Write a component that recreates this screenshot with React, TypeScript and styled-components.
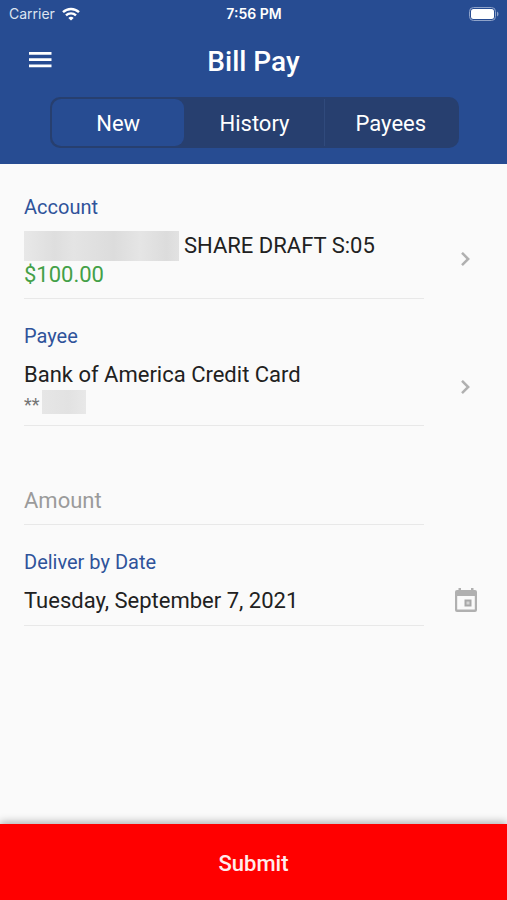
import React, { useState } from "react";
import styled, { createGlobalStyle } from "styled-components";

const GlobalStyle = createGlobalStyle`
  *, *::before, *::after { box-sizing: border-box; }
  body {
    margin: 0;
    background: #fafafa;
    color: #212121;
    font-family: Roboto, sans-serif;
  }
  button, input { font: inherit; color: inherit; }
`;

const Page = styled.div`
  display: flex;
  flex-direction: column;
  min-height: 100vh;
`;

const Header = styled.header`
  padding-bottom: 16px;
  background: #274c92;
  color: #fff;
`;

const StatusBar = styled.div`
  display: grid;
  grid-template-columns: 1fr auto 1fr;
  align-items: center;
  height: 27px;
  padding: 0 8px 0 9px;
  font-family: Inter, sans-serif;
  font-size: 14px;
`;

const Carrier = styled.span`
  display: flex;
  align-items: center;
  gap: 7px;
  color: #dde4f0;
`;

const Clock = styled.span`
  font-weight: 600;
`;

const Battery = styled.span`
  display: flex;
  justify-content: flex-end;
`;

const TitleBar = styled.div`
  display: grid;
  grid-template-columns: 32px 1fr 32px;
  align-items: center;
  height: 70px;
  padding: 0 24px;
`;

const IconButton = styled.button`
  display: flex;
  justify-content: center;
  padding: 0 0 4px;
  border: 0;
  background: none;
  cursor: pointer;
`;

const Title = styled.h1`
  margin: 0;
  font-size: 28px;
  font-weight: 500;
  line-height: 36px;
  text-align: center;
`;

const Tabs = styled.nav`
  display: grid;
  grid-template-columns: repeat(3, 1fr);
  margin: 0 48px 0 50px;
  border-radius: 10px;
  background: #273f6f;
`;

const Tab = styled.button<{ $active: boolean; $divided: boolean }>`
  height: 47px;
  margin: 2px;
  padding: 2px 0 0;
  border: 0;
  border-radius: ${(p) => (p.$active ? "9px" : "0")};
  background: ${(p) => (p.$active ? "#274c92" : "transparent")};
  box-shadow: ${(p) => (p.$divided ? "-1px 0 #304a7c" : "none")};
  font-size: 22px;
  line-height: 30px;
  cursor: pointer;
`;

const Form = styled.form`
  display: flex;
  flex: 1;
  flex-direction: column;
`;

const Fields = styled.div`
  display: flex;
  flex: 1;
  flex-direction: column;
  gap: 25px;
  padding: 31px 0 24px 24px;
`;

const Field = styled.div<{ $spaced?: boolean }>`
  padding-top: ${(p) => (p.$spaced ? "34px" : "0")};
`;

const Label = styled.label`
  display: block;
  margin-bottom: 12px;
  color: #2f539a;
  font-size: 20px;
  line-height: 24px;
`;

const Picker = styled.button`
  display: grid;
  grid-template-columns: 1fr 83px;
  align-items: center;
  justify-items: start;
  width: 100%;
  padding: 0;
  border: 0;
  background: none;
  text-align: left;
  cursor: pointer;

  > svg { justify-self: center; }
`;

const Rule = styled.hr`
  height: 1px;
  margin: 9px 83px 0 0;
  border: 0;
  background: #e8e8e8;
`;

const Line = styled.span`
  display: flex;
  align-items: center;
  font-size: 22px;
  line-height: 30px;
`;

const Balance = styled.span`
  display: block;
  color: #43a047;
  font-size: 22px;
  line-height: 28px;
`;

const Masked = styled.span`
  display: flex;
  align-items: flex-start;
  height: 26px;
  gap: 2px;
  color: #757575;
  font-size: 18px;
`;

const Stars = styled.span`
  padding-top: 4px;
  line-height: 22px;
`;

const Redacted = styled.span<{ $long?: boolean }>`
  width: ${(p) => (p.$long ? "155px" : "44px")};
  height: ${(p) => (p.$long ? "30px" : "24px")};
  margin-right: ${(p) => (p.$long ? "5px" : "0")};
  background: ${(p) =>
    p.$long
      ? "linear-gradient(90deg, #e8e8e8, #dedede 20%, #e4e4e4 32%, #dcdcdc 58%, #e5e5e5 75%, #dcdcdc 92%, #e2e2e2)"
      : "linear-gradient(90deg, #e6e6e6, #e2e2e2 60%, #e8e8e8)"};
`;

const AmountInput = styled.input`
  display: block;
  width: calc(100% - 83px);
  height: 30px;
  padding: 0;
  border: 0;
  outline: 0;
  background: none;
  font-size: 22px;

  &::placeholder { color: #9b9b9b; opacity: 1; }
`;

const Submit = styled.button`
  height: 76px;
  padding: 2px 0 0;
  border: 0;
  background: #ff0000;
  box-shadow: 0 -2px 8px rgba(0, 0, 0, 0.3);
  color: #ffecec;
  font-size: 22px;
  font-weight: 500;
  cursor: pointer;
`;

const WifiIcon = () => (
  <svg width="18" height="14" viewBox="0 0 18 14" fill="none" stroke="#fff" strokeWidth="2.4" aria-hidden="true">
    <path d="M1 5.2a11.6 11.6 0 0 1 16 0" />
    <path d="M4 8.4a7.2 7.2 0 0 1 10 0" />
    <path d="M6.3 10.9a4 4 0 0 1 5.4 0L9 13.6z" fill="#fff" stroke="none" />
  </svg>
);

const BatteryIcon = () => (
  <svg width="30" height="14" viewBox="0 0 30 14" aria-hidden="true">
    <rect x="0.5" y="0.5" width="26" height="13" rx="4" fill="none" stroke="#8fa3c9" />
    <rect x="2" y="2" width="23" height="10" rx="2.5" fill="#fff" />
    <path d="M28 4.5c2 1 2 4 0 5z" fill="#8fa3c9" />
  </svg>
);

const MenuIcon = () => (
  <svg width="24" height="18" viewBox="0 0 24 18" fill="#fff" aria-hidden="true">
    <path d="M1 1h22.500v2.700H1zM1 7.200h22.500v2.700H1zM1 13.500h22.500v2.700H1z" />
  </svg>
);

const ChevronIcon = () => (
  <svg width="12" height="16" viewBox="0 0 12 16" fill="none" stroke="#b0b0b0" strokeWidth="2.5" aria-hidden="true">
    <path d="M2 0.800 8.200 7 2 13.200" />
  </svg>
);

const CalendarIcon = () => (
  <svg width="24" height="26" viewBox="0 0 24 26" aria-hidden="true">
    <path
      fill="#b0b0b0"
      fillRule="evenodd"
      d="M4.500 0h2.500v2h10v-2h2.500v2H21a2 2 0 0 1 2 2V22a2 2 0 0 1-2 2H3a2 2 0 0 1-2-2V4a2 2 0 0 1 2-2h1.500zM3.200 8v13.600h17.600V8z"
    />
    <rect x="11.500" y="12.500" width="5" height="5" fill="#d4d4d4" stroke="#a8a8a8" strokeWidth="2" />
  </svg>
);

const tabs = ["New", "History", "Payees"];

export default function App() {
  const [active, setActive] = useState(0);
  const [amount, setAmount] = useState("");

  return (
    <Page>
      <GlobalStyle />
      <Header>
        <StatusBar>
          <Carrier>
            Carrier
            <WifiIcon />
          </Carrier>
          <Clock>7:56 PM</Clock>
          <Battery>
            <BatteryIcon />
          </Battery>
        </StatusBar>
        <TitleBar>
          <IconButton type="button" aria-label="Menu">
            <MenuIcon />
          </IconButton>
          <Title>Bill Pay</Title>
        </TitleBar>
        <Tabs aria-label="Bill Pay sections">
          {tabs.map((name, i) => (
            <Tab
              key={name}
              type="button"
              $active={i === active}
              $divided={i > 0 && i !== active && i - 1 !== active}
              aria-pressed={i === active}
              onClick={() => setActive(i)}
            >
              {name}
            </Tab>
          ))}
        </Tabs>
      </Header>
      <Form onSubmit={(e) => e.preventDefault()}>
        <Fields>
          <Field>
            <Label htmlFor="account">Account</Label>
            <Picker type="button" id="account">
              <span>
                <Line>
                  <Redacted $long />
                  SHARE DRAFT S:05
                </Line>
                <Balance>$100.00</Balance>
              </span>
              <ChevronIcon />
            </Picker>
            <Rule />
          </Field>
          <Field>
            <Label htmlFor="payee">Payee</Label>
            <Picker type="button" id="payee">
              <span>
                <Line>Bank of America Credit Card</Line>
                <Masked>
                  <Stars>**</Stars>
                  <Redacted />
                </Masked>
              </span>
              <ChevronIcon />
            </Picker>
            <Rule />
          </Field>
          <Field $spaced>
            <AmountInput
              aria-label="Amount"
              placeholder="Amount"
              inputMode="decimal"
              value={amount}
              onChange={(e) => setAmount(e.target.value)}
            />
            <Rule />
          </Field>
          <Field>
            <Label htmlFor="date">Deliver by Date</Label>
            <Picker type="button" id="date">
              <Line>Tuesday, September 7, 2021</Line>
              <CalendarIcon />
            </Picker>
            <Rule />
          </Field>
        </Fields>
        <Submit type="submit">Submit</Submit>
      </Form>
    </Page>
  );
}
